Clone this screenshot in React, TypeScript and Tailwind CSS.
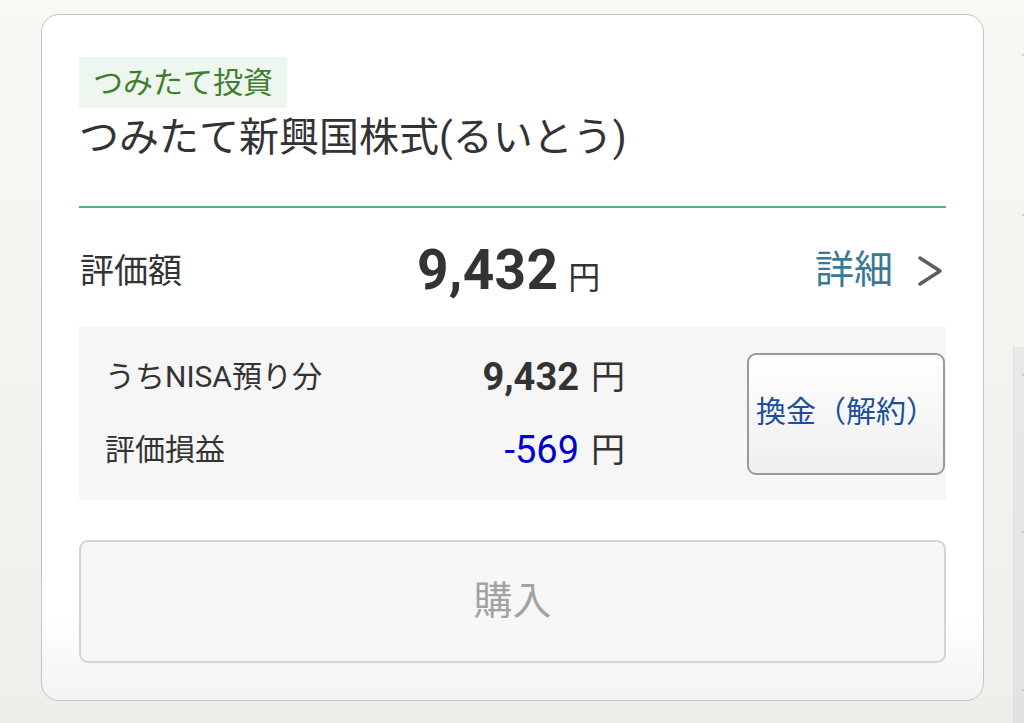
import React from 'react';

const jp = "font-['Roboto','Noto_Sans_CJK_JP',sans-serif]";

const Chevron = () => (
  <svg width="26" height="30" viewBox="0 0 26 30" fill="none" className="ml-[24px]">
    <path d="M3 2 L23 15 L3 28" stroke="#5e5e58" strokeWidth="3.5" strokeLinecap="round" strokeLinejoin="round" />
  </svg>
);

// Portfolio card for a tsumitate fund
const App = () => {
  return (
    <div className={`flex h-[723px] w-[1024px] overflow-hidden bg-gradient-to-b from-[#f9f8f5] to-[#efeeea] ${jp}`}>
      <div className="ml-[41px] mt-[14px] flex h-[687px] w-[943px] shrink-0 flex-col rounded-[18px] border border-[#c3c3c3] bg-gradient-to-b from-white from-[88%] to-[#f3f3f3] px-[37px] pt-[42px]">
        {/* Category tag */}
        <div className="flex h-[51px] w-[208px] items-center justify-center bg-[#eef7ef] text-[30px] leading-none text-[#3f7e2e]">
          つみたて投資
        </div>

        {/* Fund name */}
        <div className="flex h-[60px] items-center text-[40px] leading-none text-[#333]">
          つみたて新興国株式(るいとう)
        </div>

        <div className="mt-[38px] h-[2px] bg-[#5fae7d]" />

        {/* Valuation row */}
        <div className="flex h-[119px] items-center pt-[6px] text-[#333]">
          <div className="w-[338px] pl-px text-[34px] leading-none">評価額</div>
          <div className="flex items-baseline">
            <span className="font-['Roboto'] text-[55px] font-bold leading-none tracking-[0.3px]">9,432</span>
            <span className="ml-[10px] text-[32px] leading-none">円</span>
          </div>
          <div className="ml-auto flex items-center pr-[3px]">
            <span className="text-[39px] leading-none text-[#3b7894]">詳細</span>
            <Chevron />
          </div>
        </div>

        {/* NISA breakdown */}
        <div className="flex h-[173px] items-center bg-[#f6f6f6] pl-[26px] pr-px">
          <div className="flex w-[520px] flex-col text-[#333]">
            <div className="flex h-[73px] items-center">
              <span className="text-[30px] leading-none">うちNISA預り分</span>
              <span className="ml-auto font-['Roboto'] text-[38px] font-bold leading-none">9,432</span>
              <span className="ml-[12px] text-[34px] leading-none">円</span>
            </div>
            <div className="flex h-[73px] items-center">
              <span className="text-[30px] leading-none">評価損益</span>
              <span className="ml-auto font-['Roboto'] text-[38px] leading-none text-[#0000cc]">-569</span>
              <span className="ml-[12px] text-[34px] leading-none">円</span>
            </div>
          </div>
          <button className="ml-auto flex h-[122px] w-[198px] items-center justify-center rounded-[9px] border-2 border-[#9a9a9a] bg-gradient-to-b from-white to-[#efefef] pb-[4px] text-[30px] leading-none text-[#1c4e9e]">
            換金（解約）
          </button>
        </div>

        {/* Purchase */}
        <button className="mt-[40px] flex h-[123px] w-full items-center justify-center rounded-[9px] border-2 border-[#d3d3d3] bg-[#f7f7f7] text-[39px] leading-none text-[#a3a3a3]">
          購入
        </button>
      </div>

      {/* Edge of neighbouring panel */}
      <div className="ml-[29px] flex w-[11px] shrink-0 flex-col">
        <div className="flex h-[347px] flex-col items-end">
          <div className="mt-[54px] h-[2px] w-[2px] bg-[#cfcfcf]" />
          <div className="mt-[158px] h-[2px] w-[2px] bg-[#cfcfcf]" />
        </div>
        <div className="flex flex-1 flex-col items-end border-l border-[#dedede] bg-gradient-to-b from-[#e9e9e9] to-[#e2e2e2]">
          <div className="mt-[27px] h-[2px] w-[2px] bg-[#c8c8c8]" />
          <div className="mt-[155px] h-[2px] w-[2px] bg-[#c8c8c8]" />
          <div className="mt-[156px] h-[2px] w-[2px] bg-[#c8c8c8]" />
        </div>
      </div>
    </div>
  );
};

export default App;
